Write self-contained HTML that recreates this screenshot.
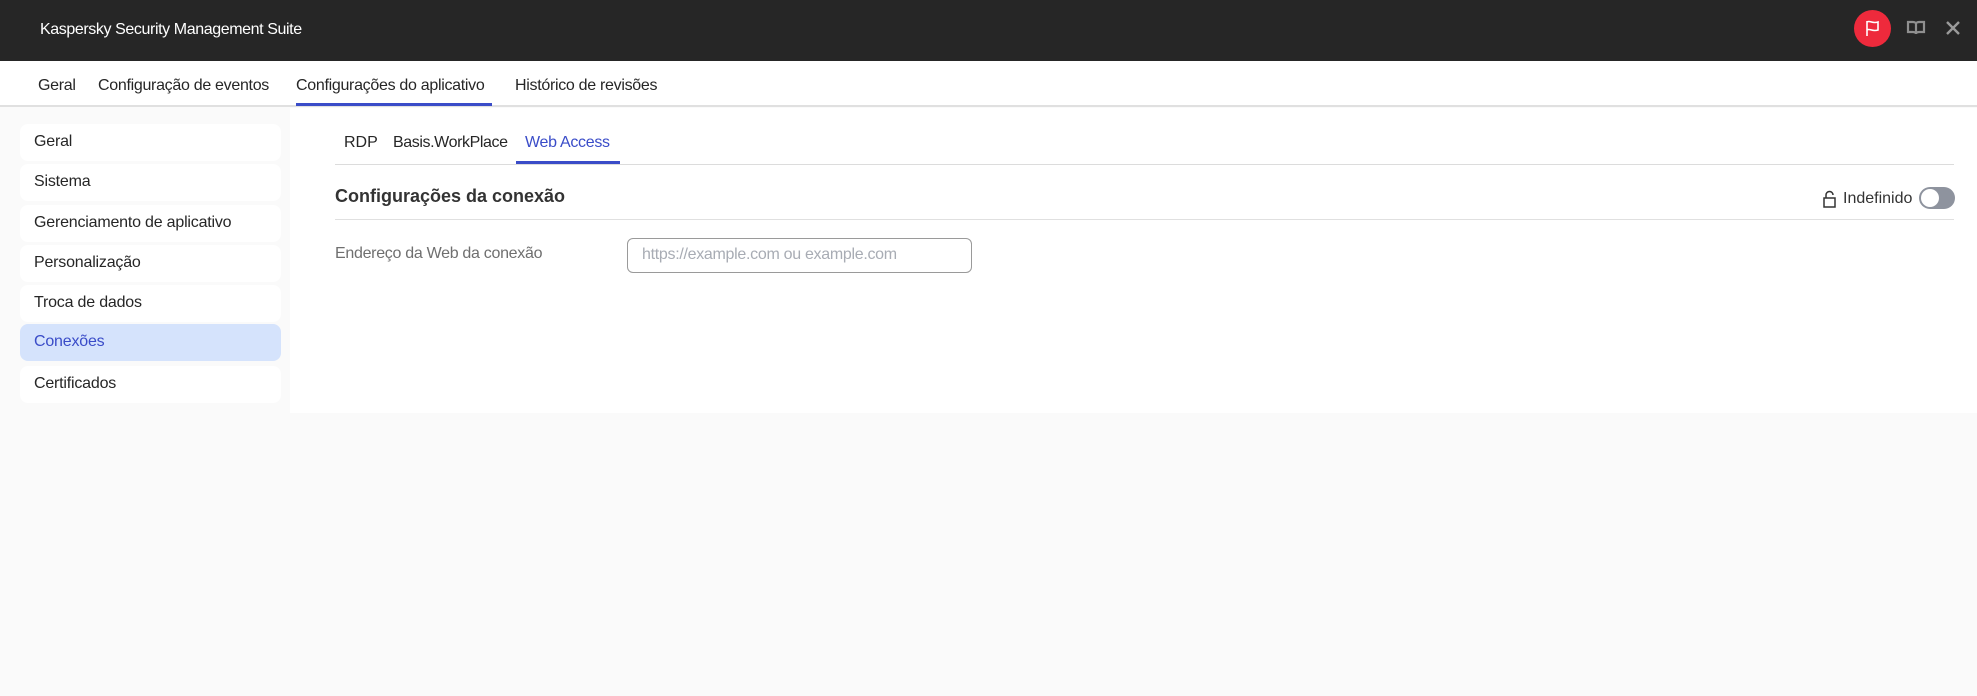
<!DOCTYPE html>
<html><head><meta charset="utf-8"><style>
*{margin:0;padding:0;box-sizing:border-box}
body{width:1977px;height:696px;background:#fafafa;font-family:"Liberation Sans",sans-serif;color:#262626;position:relative;overflow:hidden}
.a{position:absolute;white-space:nowrap}
#hdr{position:absolute;left:0;top:0;width:1977px;height:61px;background:#262626}
#nav{position:absolute;left:0;top:61px;width:1977px;height:46px;background:#fff;border-bottom:2px solid #e0e0e0}
.nt{position:absolute;top:16px;font-size:16px;color:#262626;letter-spacing:-0.3px}
#side{position:absolute;left:19px;top:112px;width:271px;height:300px}
.si{position:absolute;left:1px;width:261px;height:37px;background:#fff;border-radius:8px;font-size:16px;padding:9px 0 0 14px;letter-spacing:-0.2px}
#main{position:absolute;left:290px;top:108px;width:1687px;height:305px;background:#fff}
</style></head><body>
<div id="hdr"></div>
<div class="a" style="left:40px;top:21px;font-size:16px;color:#fff;letter-spacing:-0.4px">Kaspersky Security Management Suite</div>
<div class="a" style="left:1854px;top:10px;width:37px;height:37px;border-radius:50%;background:#ee2a3c"></div>
<svg class="a" style="left:1863px;top:19px" width="19" height="19" viewBox="0 0 19 19"><path d="M4 2v15M4 3c3-2 5 2 11 0v8c-6 2-8-2-11 0" fill="none" stroke="#fff" stroke-width="1.6"/></svg>
<svg class="a" style="left:1906px;top:19px" width="20" height="18" viewBox="0 0 20 18"><path d="M2 3h5c2 0 3 1 3 2v10c0-1-1-2-3-2H2zM18 3h-5c-2 0-3 1-3 2v10c0-1 1-2 3-2h5z" fill="none" stroke="#8f8f8f" stroke-width="2.2"/></svg>
<svg class="a" style="left:1945px;top:20px" width="16" height="16" viewBox="0 0 16 16"><path d="M2 2l12 12M14 2L2 14" stroke="#9a9a9a" stroke-width="2.4"/></svg>
<div id="nav">
<div class="nt" style="left:38px">Geral</div>
<div class="nt" style="left:98px">Configuração de eventos</div>
<div class="nt" style="left:296px">Configurações do aplicativo</div>
<div class="nt" style="left:515px">Histórico de revisões</div>
<div class="a" style="left:296px;top:42px;width:196px;height:3px;background:#3a4cc8"></div>
</div>
<div id="side">
<div class="si" style="top:12px">Geral</div>
<div class="si" style="top:52px">Sistema</div>
<div class="si" style="top:93px">Gerenciamento de aplicativo</div>
<div class="si" style="top:133px">Personalização</div>
<div class="si" style="top:173px">Troca de dados</div>
<div class="si" style="top:212px;background:#d5e3fc;color:#3a4cc8">Conexões</div>
<div class="si" style="top:254px">Certificados</div>
</div>
<div id="main"></div>
<div class="a" style="left:344px;top:134px;font-size:16px">RDP</div>
<div class="a" style="left:393px;top:134px;font-size:16px;letter-spacing:-0.4px">Basis.WorkPlace</div>
<div class="a" style="left:525px;top:134px;font-size:16px;color:#3a4cc8;letter-spacing:-0.3px">Web Access</div>
<div class="a" style="left:335px;top:164px;width:1619px;height:1px;background:#dcdcdc"></div>
<div class="a" style="left:516px;top:161px;width:104px;height:3px;background:#3a4cc8"></div>
<div class="a" style="left:335px;top:186px;font-size:18px;font-weight:bold;color:#333">Configurações da conexão</div>
<div class="a" style="left:335px;top:219px;width:1619px;height:1px;background:#e0e0e0"></div>
<svg class="a" style="left:1822px;top:190px" width="15" height="18" viewBox="0 0 15 18"><path d="M2 8h11v9H2zM4 8V5a3.5 3.5 0 0 1 7 0" fill="none" stroke="#333" stroke-width="1.5"/></svg>
<div class="a" style="left:1843px;top:190px;font-size:16px;color:#333">Indefinido</div>
<div class="a" style="left:1919px;top:187px;width:36px;height:22px;border-radius:11px;background:#8e939e"></div>
<div class="a" style="left:1921px;top:189px;width:18px;height:18px;border-radius:50%;background:#fff"></div>
<div class="a" style="left:335px;top:245px;font-size:16px;color:#6f6f6f;letter-spacing:-0.3px">Endereço da Web da conexão</div>
<div class="a" style="left:627px;top:238px;width:345px;height:35px;border:1px solid #9a9a9a;border-radius:6px"></div>
<div class="a" style="left:642px;top:246px;font-size:16px;color:#a8acb4;letter-spacing:-0.3px">https://example.com ou example.com</div>
</body></html>
